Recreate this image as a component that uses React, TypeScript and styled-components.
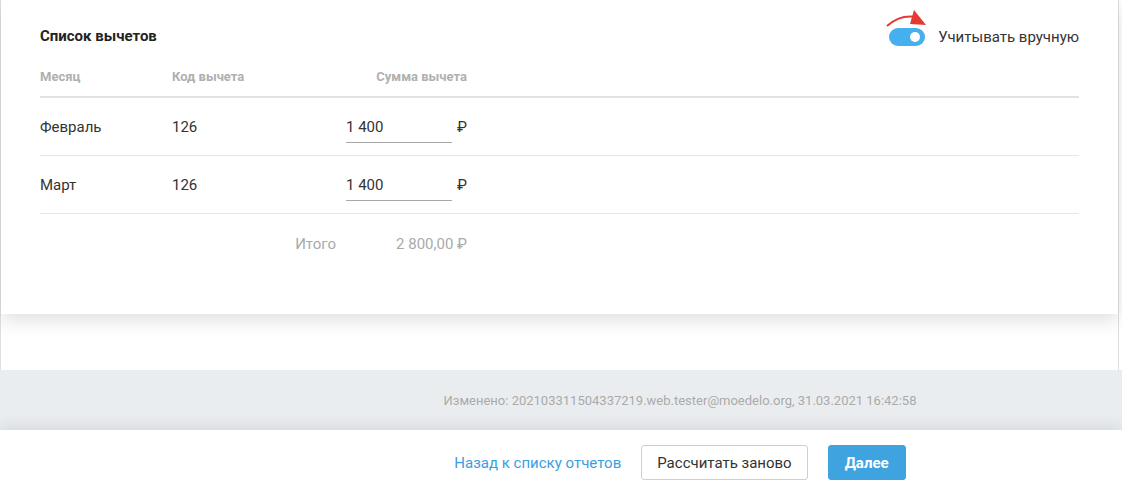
import styled, { createGlobalStyle } from 'styled-components';

const GlobalStyle = createGlobalStyle`
  html, body {
    margin: 0;
    padding: 0;
    background: #fff;
    font-family: Roboto, 'Liberation Sans', Arial, sans-serif;
    color: #333;
  }
  * { box-sizing: border-box; }
`;

const rows = [
  { month: 'Февраль', code: '126', sum: '1 400' },
  { month: 'Март', code: '126', sum: '1 400' },
];

export default function App() {
  return (
    <>
      <GlobalStyle />
      <Page>
        <Main>
          <Card>
            <TitleRow>
              <Title>Список вычетов</Title>
              <ManualSwitch>
                <Arrow width='46' height='26' viewBox='0 0 46 26'>
                  <path d='M3 20 Q16 8 33 11' fill='none' stroke='#e53935' strokeWidth='2' />
                  <polygon points='30,4 42,19 26,18' fill='#e53935' />
                </Arrow>
                <Toggle $on />
                <SwitchLabel>Учитывать вручную</SwitchLabel>
              </ManualSwitch>
            </TitleRow>

            <HeadRow>
              <HeadCell>Месяц</HeadCell>
              <HeadCell>Код вычета</HeadCell>
              <HeadCell $right>Сумма вычета</HeadCell>
            </HeadRow>

            {rows.map(r => (
              <BodyRow key={r.month}>
                <Cell>{r.month}</Cell>
                <Cell>{r.code}</Cell>
                <SumCell>
                  <SumInput defaultValue={r.sum} />
                  <Rub>₽</Rub>
                </SumCell>
              </BodyRow>
            ))}

            <TotalRow>
              <TotalLabel>Итого</TotalLabel>
              <TotalValue>2 800,00 ₽</TotalValue>
            </TotalRow>
          </Card>
        </Main>

        <MetaBand>
          Изменено: 202103311504337219.web.tester@moedelo.org, 31.03.2021 16:42:58
        </MetaBand>

        <Footer>
          <BackLink href='#'>Назад к списку отчетов</BackLink>
          <Button>Рассчитать заново</Button>
          <Button $primary>Далее</Button>
        </Footer>
      </Page>
    </>
  );
}

const Page = styled.div`
  width: 1122px;
  height: 490px;
  display: flex;
  flex-direction: column;
  overflow: hidden;
`;

const Main = styled.div`
  width: 1119px;
  height: 370px;
  border-left: 1px solid #e0e0e0;
  border-right: 1px solid #e0e0e0;
`;

const Card = styled.div`
  height: 314px;
  padding: 26px 39px 0 39px;
  background: #fff;
  box-shadow: 0 6px 18px rgba(0, 0, 0, 0.13);
  position: relative;
`;

const TitleRow = styled.div`
  height: 20px;
  display: flex;
  align-items: center;
  justify-content: space-between;
`;

const Title = styled.div`
  font-size: 15px;
  font-weight: 700;
  color: #222;
`;

const ManualSwitch = styled.div`
  position: relative;
  display: flex;
  align-items: center;
  gap: 13px;
  padding-top: 1px;
`;

const Arrow = styled.svg`
  position: absolute;
  left: -5px;
  top: -21px;
`;

const Toggle = styled.div<{ $on?: boolean }>`
  width: 36px;
  height: 18px;
  border-radius: 9px;
  background: ${p => (p.$on ? '#46b0ef' : '#ccc')};
  position: relative;
  &::after {
    content: '';
    position: absolute;
    top: 4px;
    left: ${p => (p.$on ? '21px' : '5px')};
    width: 10px;
    height: 10px;
    border-radius: 50%;
    background: #fff;
  }
`;

const SwitchLabel = styled.span`
  font-size: 15px;
  color: #333;
`;

const grid = `
  display: grid;
  grid-template-columns: 132px 174px 121px;
  align-items: center;
`;

const HeadRow = styled.div`
  ${grid}
  margin-top: 12px;
  height: 40px;
  padding-bottom: 1px;
  border-bottom: 2px solid #e2e2e2;
`;

const HeadCell = styled.div<{ $right?: boolean }>`
  font-size: 13px;
  font-weight: 700;
  color: #b0b0b0;
  text-align: ${p => (p.$right ? 'right' : 'left')};
`;

const BodyRow = styled.div`
  ${grid}
  height: 58px;
  border-bottom: 1px solid #e6e6e6;
`;

const Cell = styled.div`
  font-size: 15px;
  color: #333;
`;

const SumCell = styled.div`
  display: flex;
  align-items: center;
  justify-content: space-between;
`;

const SumInput = styled.input`
  width: 106px;
  height: 31px;
  margin-top: 2px;
  border: none;
  border-bottom: 1px solid #a8a8a8;
  outline: none;
  padding: 0;
  font-family: inherit;
  font-size: 15px;
  color: #333;
  background: transparent;
`;

const Rub = styled.span`
  font-size: 15px;
  color: #333;
`;

const TotalRow = styled.div`
  ${grid}
  grid-template-columns: 296px 131px;
  height: 58px;
  padding-top: 2px;
`;

const TotalLabel = styled.div`
  font-size: 15px;
  color: #aaa;
  text-align: right;
`;

const TotalValue = styled.div`
  font-size: 15px;
  color: #aaa;
  text-align: right;
`;

const MetaBand = styled.div`
  height: 60px;
  background: #eaedf0;
  display: flex;
  align-items: center;
  justify-content: center;
  padding-left: 238px;
  font-size: 13px;
  color: #aaa;
`;

const Footer = styled.div`
  height: 60px;
  background: #fff;
  box-shadow: 0 -4px 14px rgba(0, 0, 0, 0.08);
  position: relative;
  display: flex;
  align-items: center;
  justify-content: center;
  padding-left: 238px;
  padding-top: 5px;
  gap: 20px;
`;

const BackLink = styled.a`
  font-size: 15px;
  color: #3b9ee0;
  text-decoration: none;
`;

const Button = styled.button<{ $primary?: boolean }>`
  height: 35px;
  padding: 0 15px;
  min-width: 78px;
  border-radius: 3px;
  font-family: inherit;
  font-size: 15px;
  font-weight: ${p => (p.$primary ? 700 : 400)};
  color: ${p => (p.$primary ? '#fff' : '#333')};
  background: ${p => (p.$primary ? '#3fa3e0' : '#fff')};
  border: 1px solid ${p => (p.$primary ? '#3fa3e0' : '#cfcfcf')};
`;
